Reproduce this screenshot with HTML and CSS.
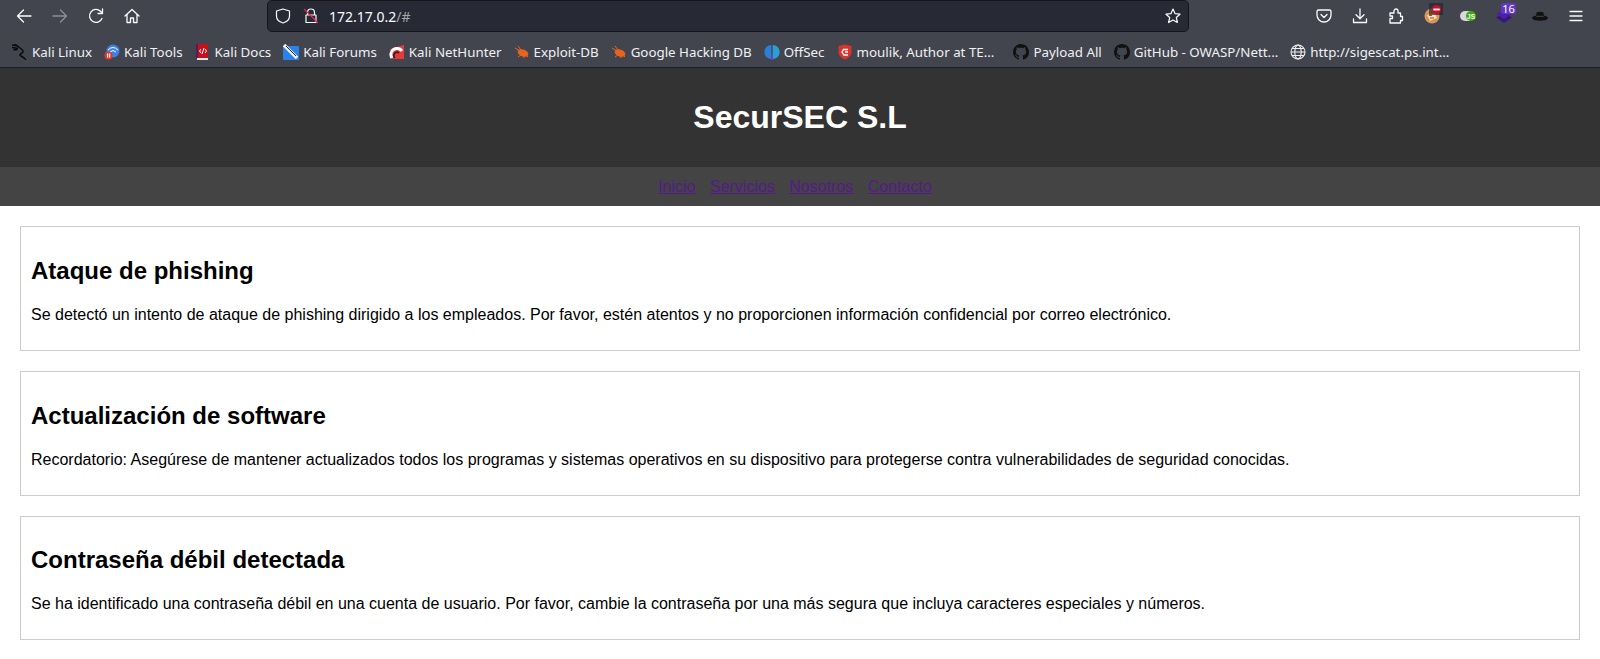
FILE: index.html
```html
<!DOCTYPE html>
<html lang="en">
<head>
    <meta charset="UTF-8">
    <title>SecurSEC S.L</title>
    <link rel="stylesheet" href="styles.css">
</head>
<body>
    <div class="browser">
        <div class="toolbar">
            <div class="nav-buttons">
                <svg class="tool-icon" viewBox="0 0 16 16"><path d="M15 8H1.500M7.500 2 1.500 8l6 6"/></svg>
                <svg class="tool-icon dim" viewBox="0 0 16 16"><path d="M1 8h13.500M8.500 2l6 6-6 6"/></svg>
                <svg class="tool-icon" viewBox="0 0 16 16"><path d="M14 10.500A6.500 6.500 0 1 1 12.500 3.200L14.500 5.200M14.500 1V5.500H10"/></svg>
                <svg class="tool-icon" viewBox="0 0 16 16"><path d="M1 8 8 1.500 15 8M3 6.500V14.500H6.500V10H9.500V14.500H13V6.500"/></svg>
            </div>
            <div class="urlbar">
                <svg class="url-icon" viewBox="0 0 16 16"><path d="M8 1 14.500 3V8C14.500 11.500 11.500 14 8 15 4.500 14 1.500 11.500 1.500 8V3Z"/></svg>
                <svg class="url-icon" viewBox="0 0 16 16"><path d="M4.500 7V4.500A3.500 3.500 0 0 1 11.500 4.500V7M3 7H13V14.500H3Z"/><path class="slash" d="M1 1 15 15"/></svg>
                <span class="url-text">172.17.0.2<span class="url-dim">/#</span></span>
                <svg class="url-icon star" viewBox="0 0 16 16"><path d="M8 1 10.100 5.700 15 6.200 11.300 9.500 12.400 14.500 8 11.900 3.600 14.500 4.700 9.500 1 6.200 5.900 5.700Z"/></svg>
            </div>
            <div class="ext-buttons">
                <svg class="tool-icon" viewBox="0 0 16 16"><path d="M2.500 2H13.500A1.500 1.500 0 0 1 15 3.500V7A7 7 0 0 1 1 7V3.500A1.500 1.500 0 0 1 2.500 2ZM5 6.500 8 9.500 11 6.500"/></svg>
                <svg class="tool-icon" viewBox="0 0 16 16"><path d="M8 1V10.500M4 6.800 8 10.800 12 6.800M1.500 11V14.500H14.500V11"/></svg>
                <svg class="tool-icon" viewBox="0 0 16 16"><path d="M2 5H6V3A2 2 0 0 1 10 3V5H12.500V8.500H14.500V12.500H12.500V15H2V10.500H4.500V8H2Z"/></svg>
                <span class="ext">
                    <svg class="ext-icon" viewBox="0 0 16 16"><circle cx="8" cy="8" r="7.500" fill="#d99a6a"/><circle cx="8" cy="8" r="6" fill="#e88d35"/><path d="M3 7 11 5 13 10 6 13Z" fill="#f3dcc0"/><path d="M5 7.500H8M6 10H10" stroke="#8a5a30"/></svg>
                    <span class="stop-box"><svg class="ext-stop" viewBox="0 0 12 12"><circle cx="6" cy="6" r="5" fill="#c8102e"/><rect x="2.500" y="5" width="7" height="2" fill="#fff"/></svg></span>
                </span>
                <span class="ext">
                    <svg class="ext-icon" viewBox="0 0 16 16"><rect x="0" y="3" width="14" height="10" rx="5" fill="#d8d8d8"/><circle cx="11" cy="8" r="5" fill="#3fa80e"/><text x="11" y="10.500" class="js-text">JS</text></svg>
                </span>
                <span class="ext">
                    <svg class="ext-icon" viewBox="0 0 16 16"><path d="M0 6 8 10.500 16 6 8 2Z" fill="#4a1fa8"/><path d="M0 9.500 8 15 16 9.500 13 7.700 8 10.800 3 7.700Z" fill="#35157f"/></svg>
                    <span class="badge">16</span>
                </span>
                <span class="ext">
                    <svg class="ext-icon" viewBox="0 0 16 16"><path d="M4.500 4.500C6.500 3.500 9.500 3.500 11.500 4.500L12 9.500H4Z" fill="#111"/><ellipse cx="8" cy="10" rx="8" ry="2.800" fill="#111"/><path d="M4.300 8.300H11.700" stroke="#555" stroke-width=".8"/></svg>
                </span>
                <svg class="tool-icon" viewBox="0 0 16 16"><path d="M2 3.500H14M2 8H14M2 12.500H14"/></svg>
            </div>
        </div>
        <div class="bookmarks">
            <a class="bookmark"><svg class="fav" viewBox="0 0 16 16"><path class="dragon" d="M0 1C3 1 6 2 8 4 11 6 12 8 10 9 8 10 7 11 9 12 11 13 13 14 14 16M0 3.500 6 4.500M1.500 6 5.500 5.500M3 0 6 2.500"/></svg>Kali Linux</a>
            <a class="bookmark"><svg class="fav" viewBox="0 0 16 16"><circle cx="9" cy="7" r="6.500" fill="#3a83e8"/><path d="M4 6Q9 1 14 6M6 8Q9 5 12 8" stroke="#fff" fill="none"/><circle cx="4.500" cy="11.500" r="4" fill="#e03a2e"/><rect x="3" y="9.500" width="1.200" height="4" fill="#fff"/><rect x="5" y="9.500" width="1.200" height="4" fill="#fff"/></svg>Kali Tools</a>
            <a class="bookmark"><svg class="fav" viewBox="0 0 16 16"><rect x="1" y="0" width="12" height="15" fill="#c4121c"/><rect x="1" y="0" width="2" height="15" fill="#5a1a5a"/><rect x="2" y="14" width="11" height="2" fill="#e8e8e8"/><path d="M6 5 4.500 7 6 9M10 5 11.500 7 10 9M9 4 7 10" stroke="#fff" fill="none"/></svg>Kali Docs</a>
            <a class="bookmark"><svg class="fav" viewBox="0 0 16 16"><rect x="0" y="2" width="16" height="14" rx="1" fill="#2b82ea"/><path d="M1 1 14 14" stroke="#eee" stroke-width="3.500"/><path d="M3 2 13 12" stroke="#222"/></svg>Kali Forums</a>
            <a class="bookmark"><svg class="fav" viewBox="0 0 16 16"><path d="M1 5 15 1V15H3Z" fill="#e83a3a"/><path d="M3 14A6 6 0 0 1 13 7" stroke="#fff" stroke-width="3" fill="none"/><path d="M6 14A3 3 0 0 1 10 9" stroke="#222" stroke-width="1.500" fill="none"/></svg>Kali NetHunter</a>
            <a class="bookmark"><svg class="fav" viewBox="0 0 16 16"><ellipse cx="9" cy="9" rx="5.500" ry="3.500" fill="#e8641e" transform="rotate(20 9 9)"/><path d="M1 4 6 7M4 2 7 6M4 13 7 11M10 14 10 12M14 13 12 11" stroke="#e8641e" fill="none"/></svg>Exploit-DB</a>
            <a class="bookmark"><svg class="fav" viewBox="0 0 16 16"><ellipse cx="9" cy="9" rx="5.500" ry="3.500" fill="#e8641e" transform="rotate(20 9 9)"/><path d="M1 4 6 7M4 2 7 6M4 13 7 11M10 14 10 12M14 13 12 11" stroke="#e8641e" fill="none"/></svg>Google Hacking DB</a>
            <a class="bookmark"><svg class="fav" viewBox="0 0 16 16"><path d="M7.300 1A7 7 0 0 0 7.300 15Z" fill="#2a7fd6"/><path d="M8.700 1A7 7 0 0 1 8.700 15Z" fill="#2a9fd6"/><rect x="7" y="10" width="2" height="6" fill="#6a3fc0"/></svg>OffSec</a>
            <a class="bookmark"><svg class="fav" viewBox="0 0 16 16"><path d="M1.500 2 8 .5 14.500 2V9C14 12 11 14.500 8 15.500 5 14.500 2 12 1.500 9Z" fill="#d9342b"/><path d="M11 5.500H6.500L5 8 7 11H11M8 8H11" stroke="#fff" stroke-width="1.300" fill="none"/></svg>moulik, Author at TE...</a>
            <a class="bookmark gap"><svg class="fav" viewBox="0 0 16 16"><use href="#octo"/></svg>Payload All</a>
            <a class="bookmark"><svg class="fav" viewBox="0 0 16 16"><use href="#octo"/></svg>GitHub - OWASP/Nett...</a>
            <a class="bookmark"><svg class="fav globe" viewBox="0 0 16 16"><circle cx="8" cy="8" r="7"/><ellipse cx="8" cy="8" rx="3.200" ry="7"/><path d="M1 8H15M2 4.500H14M2 11.500H14"/></svg>http://sigescat.ps.int...</a>
        </div>
        <svg class="defs" width="0" height="0"><defs><path id="octo" fill="#111" d="M8 0C3.580 0 0 3.580 0 8c0 3.540 2.290 6.530 5.470 7.590.4.070.55-.17.55-.38 0-.19-.01-.82-.01-1.490-2.010.37-2.530-.49-2.690-.94-.09-.23-.48-.94-.82-1.130-.28-.15-.68-.52-.01-.53.630-.01 1.080.58 1.230.82.720 1.210 1.870.87 2.330.66.070-.52.280-.87.510-1.070-1.780-.2-3.640-.89-3.640-3.950 0-.87.310-1.590.820-2.150-.08-.2-.36-1.020.08-2.120 0 0 .67-.21 2.200.82.640-.18 1.320-.27 2-.27s1.360.09 2 .27c1.530-1.040 2.200-.82 2.200-.82.44 1.100.16 1.920.08 2.120.51.560.82 1.270.82 2.150 0 3.070-1.870 3.750-3.650 3.950.29.250.54.730.54 1.480 0 1.070-.01 1.930-.01 2.200 0 .21.150.46.550.38A8.010 8.010 0 0 0 16 8c0-4.420-3.580-8-8-8Z"/></defs></svg>
    </div>

    <header class="site-header">
        <h1>SecurSEC S.L</h1>
    </header>
    <nav class="site-nav">
        <a href="#">Inicio</a>
        <a href="#">Servicios</a>
        <a href="#">Nosotros</a>
        <a href="#">Contacto</a>
    </nav>

    <main class="content">
        <section class="card">
            <h2>Ataque de phishing</h2>
            <p>Se detectó un intento de ataque de phishing dirigido a los empleados. Por favor, estén atentos y no proporcionen información confidencial por correo electrónico.</p>
        </section>
        <section class="card">
            <h2>Actualización de software</h2>
            <p>Recordatorio: Asegúrese de mantener actualizados todos los programas y sistemas operativos en su dispositivo para protegerse contra vulnerabilidades de seguridad conocidas.</p>
        </section>
        <section class="card">
            <h2>Contraseña débil detectada</h2>
            <p>Se ha identificado una contraseña débil en una cuenta de usuario. Por favor, cambie la contraseña por una más segura que incluya caracteres especiales y números.</p>
        </section>
    </main>
</body>
</html>
```

FILE: styles.css
```css
html, body {
    margin: 0;
    height: 100%;
    overflow: hidden;
}
body {
    font-family: "Liberation Sans", Arial, sans-serif;
    font-size: 16px;
    color: #000;
    background-color: #fff;
}

/* browser chrome */
.browser {
    background-color: #42454e;
    border-bottom: 1px solid #1c1c22;
    font-family: "Noto Sans", sans-serif;
}
.defs {
    position: absolute;
}
.toolbar {
    display: flex;
    align-items: center;
    height: 32px;
}
.nav-buttons {
    display: flex;
    align-items: center;
    gap: 20px;
    padding-left: 16px;
    width: 251px;
}
.tool-icon {
    width: 16px;
    height: 16px;
    flex: none;
    fill: none;
    stroke: #fbfbfe;
    stroke-width: 1.3;
    stroke-linejoin: round;
    stroke-linecap: round;
}
.tool-icon.dim {
    opacity: 0.4;
}
.urlbar {
    display: flex;
    align-items: center;
    width: 922px;
    height: 32px;
    padding: 0 7px;
    box-sizing: border-box;
    background-color: #272934;
    border: 1px solid #15151a;
    border-radius: 5px;
    color: #fbfbfe;
    font-size: 14px;
}
.url-icon {
    width: 16px;
    height: 16px;
    flex: none;
    margin-right: 12px;
    fill: none;
    stroke: #fbfbfe;
    stroke-width: 1.2;
    stroke-linejoin: round;
}
.url-icon .slash {
    stroke: #e22850;
}
.url-icon.star {
    margin: 0;
}
.url-text {
    flex: 1;
    margin-left: -2px;
}
.url-dim {
    color: #a5a6ad;
}
.ext-buttons {
    display: flex;
    align-items: center;
    gap: 20px;
    margin-left: auto;
    padding-right: 16px;
}
.ext {
    position: relative;
    display: flex;
    width: 16px;
    height: 16px;
}
.ext-icon {
    width: 16px;
    height: 16px;
}
.stop-box {
    position: absolute;
    top: -5px;
    left: 5px;
    display: flex;
    align-items: center;
    justify-content: center;
    width: 14px;
    height: 12px;
    background-color: rgba(40, 40, 44, 0.7);
}
.ext-stop {
    width: 11px;
    height: 11px;
}
.js-text {
    font-family: "Liberation Sans", sans-serif;
    font-size: 6.5px;
    font-weight: bold;
    fill: #fff;
    text-anchor: middle;
}
.badge {
    position: absolute;
    top: -5px;
    left: 5px;
    width: 15px;
    background-color: #6236c8;
    border-radius: 2px;
    color: #fff;
    font-size: 11px;
    line-height: 11px;
    text-align: center;
}
.bookmarks {
    display: flex;
    align-items: center;
    gap: 12px;
    height: 35px;
    padding: 5px 0 0 12px;
    box-sizing: border-box;
    color: #f0f0f2;
    font-size: 13.33px;
    white-space: nowrap;
}
.bookmark {
    display: flex;
    align-items: center;
    gap: 4px;
}
.bookmark.gap {
    margin-left: 7px;
}
.fav {
    width: 16px;
    height: 16px;
    flex: none;
}
.fav .dragon {
    fill: none;
    stroke: #0a0a0a;
    stroke-width: 1.4;
}
.fav.globe {
    fill: none;
    stroke: #f0f0f2;
    stroke-width: 1.1;
}

/* page */
.site-header {
    background-color: #333;
    color: #fff;
    text-align: center;
    padding: 20px;
}
.site-header h1 {
    margin: 11px 0;
    font-size: 32px;
    line-height: 37px;
}
.site-nav {
    padding: 10px;
    background-color: #444;
    line-height: 19px;
    text-align: center;
}
.site-nav a {
    margin-right: 10px;
    color: #551a8b;
}
.content {
    display: flex;
    flex-direction: column;
    gap: 20px;
    padding: 20px;
}
.card {
    padding: 10px;
    border: 1px solid #ccc;
}
.card h2 {
    margin: 19.8px 0 21px;
    font-size: 24px;
    line-height: 28px;
}
.card p {
    margin: 0 0 16px;
    line-height: 18px;
}
```
